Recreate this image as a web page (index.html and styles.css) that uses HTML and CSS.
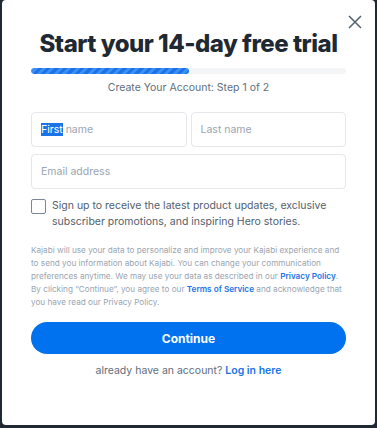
FILE: index.html
```html
<!DOCTYPE html>
<html lang="en">
<head>
<meta charset="utf-8">
<link rel="stylesheet" href="styles.css">
</head>
<body>
<div class="modal">
  <button class="close" aria-label="Close">
    <svg width="14" height="14" viewBox="0 0 14 14"><path d="M1 1L13 13M13 1L1 13" stroke="#52606d" stroke-width="1.5" fill="none"/></svg>
  </button>
  <h1 class="title">Start your 14-day free trial</h1>
  <div class="progress"><div class="progress-fill"></div></div>
  <p class="step">Create Your Account: Step 1 of 2</p>
  <div class="row">
    <div class="field"><span class="sel">First</span>&nbsp;name</div>
    <div class="field">Last name</div>
  </div>
  <div class="field email">Email address</div>
  <label class="check">
    <span class="box"></span>
    <span class="check-text">Sign up to receive the latest product updates, exclusive subscriber promotions, and inspiring Hero stories.</span>
  </label>
  <p class="legal">Kajabi will use your data to personalize and improve your Kajabi experience and to send you information about Kajabi. You can change your communication preferences anytime. We may use your data as described in our <a class="link">Privacy Policy</a>. By clicking “Continue”, you agree to our <a class="link">Terms of Service</a> and acknowledge that you have read our Privacy Policy.</p>
  <button class="continue">Continue</button>
  <p class="login">already have an account? <a class="login-link">Log in here</a></p>
</div>
</body>
</html>
```
FILE: styles.css
```css
html, body {
  margin: 0;
  padding: 0;
}
body {
  background: #1f2933;
  width: 377px;
  height: 428px;
  overflow: hidden;
  font-family: Inter, "Noto Sans", sans-serif;
}
.modal {
  position: relative;
  box-sizing: border-box;
  margin-left: 2px;
  width: 373px;
  height: 425px;
  background: #fff;
  border-radius: 4px;
  padding: 31px 29px 0 29px;
}
.close {
  position: absolute;
  top: 15px;
  right: 13px;
  background: none;
  border: 0;
  padding: 0;
  width: 14px;
  height: 14px;
}
.close svg { display: block; }
.title {
  margin: 0;
  text-align: center;
  font-size: 24px;
  font-weight: 800;
  letter-spacing: -0.5px;
  color: #1f2933;
  line-height: 26px;
}
.progress {
  margin-top: 11px;
  height: 6px;
  border-radius: 3px;
  background: #f3f5f7;
  overflow: hidden;
}
.progress-fill {
  width: 158px;
  height: 100%;
  border-radius: 3px;
  background: repeating-linear-gradient(-45deg, #1a73e8 0 3px, #3d8ff2 3px 6px);
}
.step {
  margin: 7px 0 0;
  text-align: center;
  font-size: 10.5px;
  color: #616e7c;
  line-height: 14px;
}
.row {
  display: grid;
  grid-template-columns: 1fr 1fr;
  gap: 4px;
  margin-top: 17px;
}
.field {
  box-sizing: border-box;
  height: 35px;
  border: 1px solid #e4e7eb;
  border-radius: 4px;
  padding: 0 9px;
  display: flex;
  align-items: center;
  font-size: 10.5px;
  color: #9aa5b1;
}
.sel {
  background: #1a73e8;
  color: #fff;
}
.email {
  margin-top: 7px;
}
.check {
  display: flex;
  gap: 6px;
  margin-top: 10px;
  align-items: flex-start;
}
.box {
  flex: none;
  box-sizing: border-box;
  width: 15px;
  height: 15px;
  border: 1px solid #7b8794;
  border-radius: 2px;
}
.check-text {
  font-size: 10.5px;
  line-height: 16px;
  margin-top: -1px;
  color: #52606d;
}
.legal {
  margin: 14px 0 0;
  font-size: 8.2px;
  line-height: 13px;
  color: #9aa5b1;
}
.link {
  color: #1a73e8;
  font-weight: 600;
}
.continue {
  display: block;
  width: 100%;
  height: 32px;
  margin-top: 13px;
  border: 0;
  border-radius: 16px;
  background: #0072ef;
  color: #fff;
  font-family: inherit;
  font-size: 12px;
  font-weight: 700;
}
.login {
  margin: 10px 0 0;
  text-align: center;
  font-size: 10.5px;
  line-height: 13px;
  color: #616e7c;
}
.login-link {
  color: #1a73e8;
  font-weight: 600;
}
```
